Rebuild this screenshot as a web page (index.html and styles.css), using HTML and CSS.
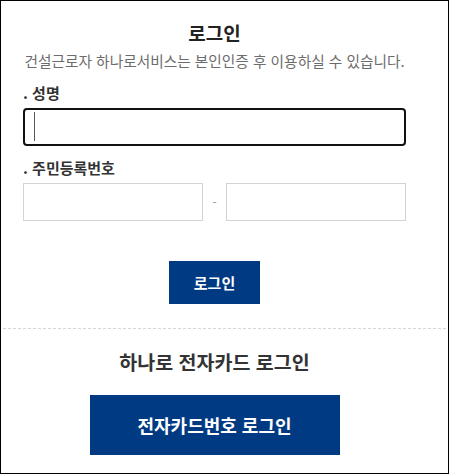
FILE: index.html
```html
<!DOCTYPE html>
<html lang="ko">
<head>
<meta charset="utf-8">
<title>로그인</title>
<link rel="stylesheet" href="styles.css">
</head>
<body>
<div class="frame">
  <section class="login">
    <h1 class="title">로그인</h1>
    <p class="desc">건설근로자 하나로서비스는 본인인증 후 이용하실 수 있습니다.</p>
    <label class="label" for="name">. 성명</label>
    <div class="field field-focus">
      <input id="name" class="input input-focus" type="text">
      <span class="caret"></span>
    </div>
    <label class="label label-2" for="rrn1">. 주민등록번호</label>
    <div class="rrn">
      <input id="rrn1" class="input input-plain" type="text">
      <span class="dash">-</span>
      <input id="rrn2" class="input input-plain" type="password">
    </div>
    <div class="btn-row">
      <button class="btn btn-login" type="button">로그인</button>
    </div>
  </section>
  <div class="divider"></div>
  <section class="card">
    <h2 class="card-title">하나로 전자카드 로그인</h2>
    <div class="btn-row">
      <button class="btn btn-card" type="button">전자카드번호 로그인</button>
    </div>
  </section>
</div>
</body>
</html>
```
FILE: styles.css
```css
* { box-sizing: border-box; }
html, body { margin: 0; padding: 0; background: #fff; }
body {
  font-family: "Noto Sans CJK KR", "Noto Sans", sans-serif;
  color: #333;
}
.frame {
  width: 449px;
  height: 474px;
  border: 1px solid #000;
  background: #fff;
}
.login {
  padding: 19px 42px 0 22px;
}
.title {
  margin: 0;
  font-size: 19px;
  line-height: 26px;
  font-weight: 700;
  color: #222;
  text-align: center;
}
.desc {
  margin: 5px 0 0;
  font-size: 14.7px;
  line-height: 20px;
  color: #6c6c6c;
  text-align: center;
  white-space: nowrap;
}
.label {
  display: block;
  margin-top: 12px;
  font-size: 15px;
  line-height: 20px;
  font-weight: 700;
  color: #333;
}
.field {
  position: relative;
  margin-top: 5px;
  height: 38px;
}
.input {
  display: block;
  margin: 0;
  height: 38px;
  padding: 0 9px;
  font-family: inherit;
  font-size: 15px;
  background: #fff;
  outline: none;
}
.input-focus {
  width: 100%;
  border: 2px solid #111;
  border-radius: 4px;
}
.caret {
  position: absolute;
  left: 11px;
  top: 4px;
  width: 1px;
  height: 29px;
  background: #555;
}
.rrn {
  display: flex;
  align-items: center;
  margin-top: 5px;
}
.input-plain {
  width: 180px;
  border: 1px solid #d3d3d3;
  border-radius: 0;
}
.dash {
  width: 23px;
  text-align: center;
  font-size: 12px;
  line-height: 12px;
  color: #999;
}
.btn-row {
  display: flex;
  justify-content: center;
}
.btn {
  border: none;
  margin: 0;
  padding: 0;
  background: #003a82;
  color: #fff;
  font-family: inherit;
  font-weight: 700;
  cursor: pointer;
}
.btn-login {
  margin-top: 40px;
  width: 91px;
  height: 43px;
  font-size: 15px;
}
.divider {
  margin: 24px 2px 0;
  border-top: 1px dashed #d6d6d6;
}
.card {
  padding: 20px 42px 0 22px;
}
.card-title {
  margin: 0;
  font-size: 19.5px;
  line-height: 26px;
  font-weight: 700;
  color: #333;
  text-align: center;
}
.btn-card {
  margin-top: 20px;
  width: 250px;
  height: 60px;
  font-size: 18px;
}
```
